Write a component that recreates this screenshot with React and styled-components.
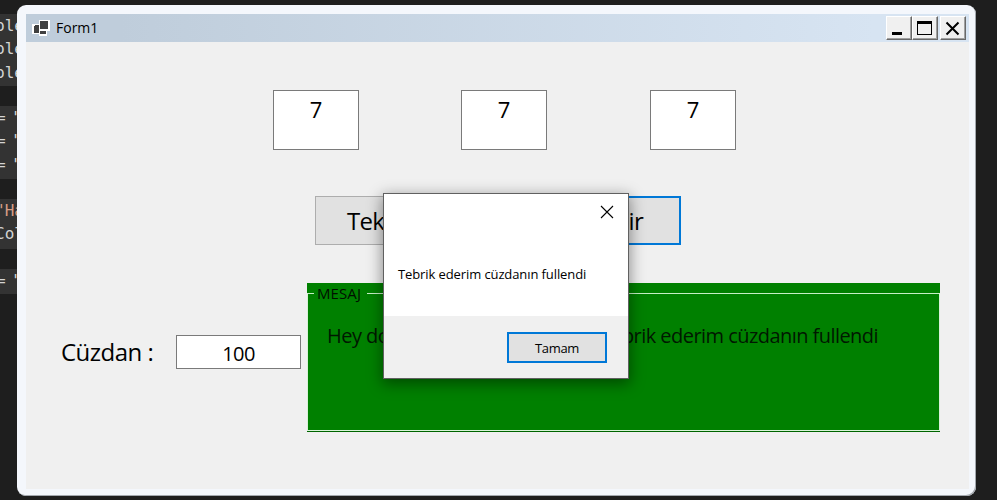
import React from "react";
import styled, { createGlobalStyle } from "styled-components";

const Global = createGlobalStyle`
  * { box-sizing: border-box; }
  body { margin: 0; background: #1e1e1e; font-family: "Open Sans", "Noto Sans", sans-serif; color: #000; }
`;

const Desktop = styled.div`
  position: relative;
  display: flex;
  width: 997px;
  height: 500px;
  overflow: hidden;
  background: #1e1e1e;
`;

const Editor = styled.div`
  width: 17px;
  flex: none;
  padding-top: 14px;
  display: flex;
  flex-direction: column;
  gap: 20px;
  overflow: hidden;
`;

const CodeBlock = styled.div`
  height: ${(p) => p.$h}px;
  flex: none;
  background: #333;
  overflow: hidden;
`;

const CodeLine = styled.div`
  height: 23.3px;
  line-height: 23.3px;
  margin-left: ${(p) => p.$shift}px;
  font-family: "DejaVu Sans Mono", monospace;
  font-size: 16px;
  letter-spacing: ${(p) => (p.$tight ? -1.5 : 0)}px;
  white-space: pre;
  color: ${(p) => p.$color || "#d4d4d4"};
`;

const Window = styled.div`
  width: 959px;
  height: 491px;
  flex: none;
  margin-top: 5px;
  padding: 9px 7px 7px 9px;
  border-radius: 9px;
  background: #f4f7fc;
  box-shadow: inset -1px -1px 0 #a3a8ae;
`;

const TitleBar = styled.div`
  display: flex;
  align-items: center;
  height: 28px;
  padding: 0 3px 0 6px;
  background: linear-gradient(90deg, #bfcddb 0%, #bfcddb 10%, #d7e4f2 90%);
`;

const Title = styled.span`
  flex: 1;
  margin-left: 6px;
  font-size: 14px;
  line-height: 28px;
`;

const CaptionButton = styled.div`
  width: 26px;
  height: 24px;
  margin-left: ${(p) => p.$gap || 0}px;
  border: 1px solid;
  border-color: #fff #696969 #696969 #fff;
  box-shadow: inset -1px -1px 0 #a0a0a0;
  background: #f0f0f0;
  svg { display: block; }
`;

const Client = styled.div`
  height: 447px;
  padding-top: 48px;
  background: #f0f0f0;
`;

const Slots = styled.div`
  display: grid;
  grid-template-columns: 188px 189px 86px;
  margin-left: 247px;
`;

const TextBox = styled.div`
  width: ${(p) => p.$w}px;
  height: ${(p) => p.$h}px;
  flex: none;
  border: 1px solid #7a7a7a;
  background: #fff;
  text-align: center;
  font-size: ${(p) => p.$size}px;
  line-height: ${(p) => p.$line}px;
  letter-spacing: ${(p) => p.$spacing || 0}px;
`;

const Actions = styled.div`
  display: flex;
  justify-content: space-between;
  width: 366px;
  margin: 46px 0 0 289px;
`;

const ActionButton = styled.div`
  display: flex;
  justify-content: ${(p) => (p.$focused ? "flex-end" : "flex-start")};
  width: 165px;
  height: 49px;
  padding: ${(p) => (p.$focused ? "0 36px 0 0" : "0 0 0 31px")};
  border: ${(p) => (p.$focused ? "2px solid #0078d7" : "1px solid #adadad")};
  background: #e1e1e1;
  font-size: 24px;
  line-height: ${(p) => (p.$focused ? 45 : 47)}px;
  letter-spacing: -0.7px;
`;

const Lower = styled.div`
  display: flex;
  margin-top: 38px;
  padding-left: 35px;
`;

const Wallet = styled.div`
  display: flex;
  align-items: center;
  width: 246px;
  height: 34px;
  margin-top: 52px;
  flex: none;
`;

const WalletLabel = styled.span`
  width: 115px;
  font-size: 24px;
  line-height: 34px;
  letter-spacing: -0.5px;
  white-space: nowrap;
`;

const Group = styled.div`
  width: 633px;
  height: 149px;
  border-bottom: 1px solid #006400;
  background: linear-gradient(#008000 0 10px, #d8f0d8 10px);
`;

const GroupFrame = styled.div`
  height: 148px;
  margin: 0 1px;
  border-bottom: 1px solid #d8f5d8;
  background: #008000;
`;

const GroupHeader = styled.div`
  display: flex;
  align-items: center;
  height: 21px;
  gap: 2px;
`;

const Rule = styled.div`
  width: ${(p) => p.$w}px;
  flex: ${(p) => (p.$w ? "none" : 1)};
  height: 1px;
  background: #c5efc5;
`;

const GroupTitle = styled.span`
  width: 49px;
  padding-left: 1px;
  font-size: 15px;
  line-height: 21px;
  letter-spacing: 0.1px;
  color: #001000;
`;

const Message = styled.div`
  display: flex;
  justify-content: space-between;
  padding: 18px 61px 0 19px;
  font-size: 20px;
  line-height: 28px;
  letter-spacing: -0.55px;
  color: #001800;
  white-space: nowrap;
`;

const Dialog = styled.div`
  position: absolute;
  left: 383px;
  top: 193px;
  width: 246px;
  height: 186px;
  border: 1px solid #606060;
  background: #fff;
  box-shadow: 0 4px 14px 1px rgba(0, 0, 0, 0.42);
`;

const DialogClose = styled.div`
  display: flex;
  justify-content: flex-end;
  height: 30px;
  padding: 11px 14px 0 0;
`;

const DialogText = styled.div`
  height: 92px;
  padding: 40px 0 0 14px;
  font-size: 13px;
  line-height: 20px;
  letter-spacing: -0.1px;
  white-space: nowrap;
`;

const DialogFooter = styled.div`
  display: flex;
  justify-content: flex-end;
  height: 62px;
  padding: 16px 21px 0 0;
  background: #f0f0f0;
`;

const OkButton = styled.div`
  width: 100px;
  height: 31px;
  border: 2px solid #0078d7;
  background: #e1e1e1;
  text-align: center;
  font-size: 13px;
  letter-spacing: -0.3px;
  line-height: 29px;
`;

function FormIcon() {
  return (
    <svg width="18" height="18" viewBox="0 0 18 18" shapeRendering="crispEdges">
      <path d="M0 5h7V1h11v11h-3v5H7v-2H0z" fill="#fff" />
      <path d="M3 6h4v8H2V7h1zM8 2h8v8H8zM8 12h6v3H8z" fill="#404040" />
    </svg>
  );
}

const codeBlocks = [
  { h: 72, lines: [["ble", -5], ["ble", -5], ["ble", -5]] },
  { h: 73, tight: true, lines: [["= \"", -4], ["= \"", -4], ["= \"", -4]] },
  { h: 50, lines: [["\"Ha", -5, "#d69d85"], ["Col", -5]] },
  { h: 25, tight: true, lines: [["= \"", -4]] },
];

export default function App() {
  return (
    <Desktop>
      <Global />
      <Editor>
        {codeBlocks.map((block, i) => (
          <CodeBlock key={i} $h={block.h}>
            {block.lines.map(([text, shift, color], j) => (
              <CodeLine key={j} $shift={shift} $color={color} $tight={block.tight}>{text}</CodeLine>
            ))}
          </CodeBlock>
        ))}
      </Editor>
      <Window>
        <TitleBar>
          <FormIcon />
          <Title>Form1</Title>
          <CaptionButton>
            <svg width="24" height="22" shapeRendering="crispEdges"><path d="M5 15h10v3H5z" /></svg>
          </CaptionButton>
          <CaptionButton>
            <svg width="24" height="22" shapeRendering="crispEdges">
              <path d="M4 4h15v14H4zM5 7v10h13V7z" fillRule="evenodd" />
            </svg>
          </CaptionButton>
          <CaptionButton $gap={2}>
            <svg width="24" height="22"><path d="M5.5 5.5l12 12M17.5 5.5l-12 12" stroke="#000" strokeWidth="2" /></svg>
          </CaptionButton>
        </TitleBar>
        <Client>
          <Slots>
            {[7, 7, 7].map((n, i) => (
              <TextBox key={i} $w={86} $h={60} $size={22} $line={37}>{n}</TextBox>
            ))}
          </Slots>
          <Actions>
            <ActionButton>Tek</ActionButton>
            <ActionButton $focused>ir</ActionButton>
          </Actions>
          <Lower>
            <Wallet>
              <WalletLabel>Cüzdan :</WalletLabel>
              <TextBox $w={125} $h={34} $size={20} $line={36} $spacing={-0.6}>100</TextBox>
            </Wallet>
            <Group>
              <GroupFrame>
                <GroupHeader>
                  <Rule $w={6} />
                  <GroupTitle>MESAJ</GroupTitle>
                  <Rule />
                </GroupHeader>
                <Message>
                  <span>Hey do</span>
                  <span>brik ederim cüzdanın fullendi</span>
                </Message>
              </GroupFrame>
            </Group>
          </Lower>
        </Client>
      </Window>
      <Dialog>
        <DialogClose>
          <svg width="14" height="14"><path d="M1 1l12 12M13 1L1 13" stroke="#000" strokeWidth="1.1" /></svg>
        </DialogClose>
        <DialogText>Tebrik ederim cüzdanın fullendi</DialogText>
        <DialogFooter><OkButton>Tamam</OkButton></DialogFooter>
      </Dialog>
    </Desktop>
  );
}
